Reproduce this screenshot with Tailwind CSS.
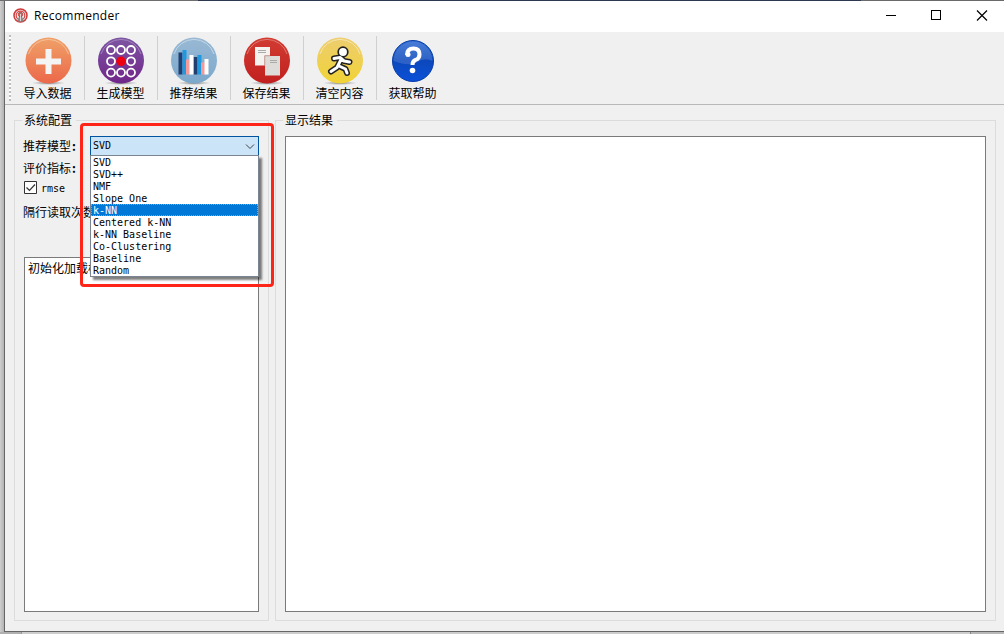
<!DOCTYPE html>
<html lang="zh-CN">
<head>
<meta charset="utf-8">
<title>Recommender</title>
<script src="https://cdn.jsdelivr.net/npm/@tailwindcss/browser@4"></script>
</head>
<body class="relative h-[634px] w-[1004px] overflow-hidden bg-[#c4c4c4] font-['Noto_Sans_CJK_SC',sans-serif] text-[12px] leading-[14px] text-black">
<div class="flex h-px"><div class="w-[198px] bg-[#6e6e6e]"></div><div class="w-[663px] bg-[#2b3850]"></div><div class="flex-1 bg-[#6a6a6a]"></div></div>
<div class="flex h-[631px]">
  <div class="w-1 bg-linear-to-r from-[#cfcfcf] to-[#b2b2b2]"></div>
  <main class="flex flex-1 flex-col border-b border-l border-[#666] bg-[#f0f0f0]">
    <header class="flex h-[31px] items-center bg-white pl-[8px]">
      <svg class="-mt-[2px] h-[15px] w-[15px]" viewBox="0 0 15 15" fill="none">
        <circle cx="7.500" cy="7.500" r="6.500" fill="#eee" stroke="#cf3a38" stroke-width="1.500"/>
        <circle cx="7.500" cy="7.500" r="4.300" stroke="#d24a48" stroke-width="1.200"/>
        <path d="M7.500 4 4.300 13.500h6.400z" fill="#888"/><circle cx="7.500" cy="6.500" r="2.200" fill="#9a7a78" stroke="#c8302e" stroke-width=".8"/><path d="M7.500 6v7" stroke="#eee" stroke-width=".8"/>
      </svg>
      <span class="ml-[6px] -mt-px font-['Open_Sans',sans-serif] text-[12px] tracking-[0.3px]">Recommender</span>
      <svg class="ml-auto h-[31px] w-[120px]" viewBox="0 0 120 31" fill="none" stroke="#000" shape-rendering="crispEdges"><path d="M2 14.500h10M47.500 9.500h9v9h-9z"/><path d="m93 9.500 10 10m0-10-10 10" shape-rendering="auto" stroke-width="1.200"/></svg>
    </header>

    <nav class="flex h-[73px] border-b border-[#b8b8b8] pl-[4px]">
      <svg class="h-[72px] w-[3px]" viewBox="0 0 3 72"><path d="M1 4v64" stroke="#fff" stroke-width="2"/><path d="M1 3v66" stroke="#bcbcbc" stroke-width="2" stroke-dasharray="2 2"/></svg>
      <svg class="absolute h-0 w-0">
        <defs>
          <linearGradient id="orange" x2="0" y2="1"><stop stop-color="#efa168"/><stop offset="1" stop-color="#ec684a"/></linearGradient>
          <linearGradient id="purple" x2="0" y2="1"><stop stop-color="#7d56a2"/><stop offset="1" stop-color="#70268a"/></linearGradient>
          <linearGradient id="sky" x2="0" y2="1"><stop stop-color="#99b9d4"/><stop offset="1" stop-color="#7ba8cc"/></linearGradient>
          <linearGradient id="red" x2="0" y2="1"><stop stop-color="#d13c32"/><stop offset="1" stop-color="#c2201f"/></linearGradient>
          <linearGradient id="yellow" x2="0" y2="1"><stop stop-color="#edcd70"/><stop offset="1" stop-color="#f1d335"/></linearGradient>
          <linearGradient id="blue" x2="0" y2="1"><stop stop-color="#2a68d0"/><stop offset=".5" stop-color="#0c48bc"/><stop offset="1" stop-color="#0a50d8"/></linearGradient>
          <radialGradient id="shade"><stop stop-color="#555" stop-opacity=".8"/><stop offset="1" stop-color="#888" stop-opacity="0"/></radialGradient>
        </defs>
      </svg>
      <div class="my-1 flex w-[73px] flex-col items-center border-r border-[#d0d0d0] pt-px">
        <svg class="h-12 w-12 shrink-0" viewBox="0 0 48 48"><ellipse cx="24.500" cy="46" rx="17" ry="2" fill="url(#shade)"/><circle cx="24.500" cy="23.500" r="23" fill="url(#orange)"/><path d="M4.500 17a21 21 0 0 1 40 0" fill="none" stroke="#f7c09a" stroke-width="1"/><path d="M21.500 12h6v9.500h9.500v6h-9.500v9.500h-6v-9.500H12v-6h9.500z" fill="#f4f4f4"/></svg>
        <span class="mt-px -ml-px">导入数据</span>
      </div>
      <div class="my-1 flex w-[73px] flex-col items-center border-r border-[#d0d0d0] pt-px">
        <svg class="h-12 w-12 shrink-0" viewBox="0 0 48 48"><ellipse cx="24" cy="46" rx="17" ry="2" fill="url(#shade)"/><circle cx="24" cy="23.500" r="23" fill="url(#purple)"/><path d="M4 17a21 21 0 0 1 40 0" fill="none" stroke="#a282be"/><g fill="none" stroke="#fff" stroke-width="1.800"><circle cx="14" cy="13" r="4"/><circle cx="24" cy="13" r="4"/><circle cx="34" cy="13" r="4"/><circle cx="14" cy="24.300" r="4"/><circle cx="34" cy="24.300" r="4"/><circle cx="14" cy="35.600" r="4"/><circle cx="24" cy="35.600" r="4"/><circle cx="34" cy="35.600" r="4"/></g><circle cx="24" cy="24.300" r="4.800" fill="#ee0010"/></svg>
        <span class="mt-px -ml-px">生成模型</span>
      </div>
      <div class="my-1 flex w-[73px] flex-col items-center border-r border-[#d0d0d0] pt-px">
        <svg class="h-12 w-12 shrink-0" viewBox="0 0 48 48"><ellipse cx="24" cy="46" rx="17" ry="2" fill="url(#shade)"/><circle cx="24" cy="23.500" r="23" fill="url(#sky)"/><path d="M4 17a21 21 0 0 1 40 0" fill="none" stroke="#c3d7e7"/><path d="M8.500 15.500h4v22h-4zM23.500 20h4v17.500h-4z" fill="#233f70"/><path d="M12.500 13h4v24.500h-4zM27.500 18h4v19.500h-4z" fill="#2199df"/><path d="M16 22.500h4v15h-4zM31 25.500h4v12h-4z" fill="#f49a9b"/><path d="M19.500 18h4v19.500h-4zM34.500 22h4v15.500h-4z" fill="#fff"/></svg>
        <span class="mt-px -ml-px">推荐结果</span>
      </div>
      <div class="my-1 flex w-[73px] flex-col items-center border-r border-[#d0d0d0] pt-px">
        <svg class="h-12 w-12 shrink-0" viewBox="0 0 48 48"><ellipse cx="24" cy="46" rx="17" ry="2" fill="url(#shade)"/><circle cx="24" cy="23.500" r="23" fill="url(#red)"/><path d="M4 17a21 21 0 0 1 40 0" fill="none" stroke="#df7970"/><path d="M12 10h15v18.500H12z" fill="#f4f3ef"/><path d="M22 19h15v19.500H22z" fill="#dddcd8"/><path d="M15 13.500h8M15 15.500h8M27 23.500h7M27 25.500h7" stroke="#aaa"/><path d="M21.700 28.500V18.700H27" fill="none" stroke="#a65b54" stroke-width=".6"/></svg>
        <span class="mt-px -ml-px">保存结果</span>
      </div>
      <div class="my-1 flex w-[73px] flex-col items-center border-r border-[#d0d0d0] pt-px">
        <svg class="h-12 w-12 shrink-0" viewBox="0 0 48 48"><ellipse cx="24" cy="46" rx="17" ry="2" fill="url(#shade)"/><circle cx="24" cy="23.500" r="23" fill="url(#yellow)"/><path d="M4 17a21 21 0 0 1 40 0" fill="none" stroke="#f6e6ae"/><g stroke-linecap="round" stroke-linejoin="round" fill="none"><path d="m18 21.500 6-1 4 3.500 5.500 1M25.500 21.500 21 30.500 15 34.500M23 29l6.500 3 1.500 4" stroke="#222" stroke-width="6"/><circle cx="27" cy="15" r="4.800" fill="#fff" stroke="#222" stroke-width="1.700"/><path d="m18 21.500 6-1 4 3.500 5.500 1M25.500 21.500 21 30.500 15 34.500M23 29l6.500 3 1.500 4" stroke="#fff" stroke-width="3"/></g></svg>
        <span class="mt-px -ml-px">清空内容</span>
      </div>
      <div class="my-1 flex w-[72px] flex-col items-center pt-px">
        <svg class="h-12 w-12 shrink-0" viewBox="0 0 48 48"><circle cx="24" cy="24" r="20.500" fill="url(#blue)" stroke="#083da9"/><path d="M4.500 24A19.500 19.500 0 0 1 43.500 24q-8-4-15 1t-24-1z" fill="#fff" opacity=".14"/><path d="M18 18q0-6.500 6.500-6.500 6 0 6 6 0 4-4 5.500-3 1-3 5" fill="none" stroke="#fff" stroke-width="4"/><circle cx="19" cy="17.500" r="2.500" fill="#fff"/><circle cx="23.500" cy="33.500" r="2.800" fill="#fff"/></svg>
        <span class="mt-px -ml-px">获取帮助</span>
      </div>
    </nav>

    <div class="flex flex-1 gap-[6px] pt-[8px] pr-2 pb-[10px] pl-[9px]">
      <section class="flex w-[255px] flex-col">
        <h2 class="flex h-[15px] items-center"><span class="h-[8px] w-[8px] self-end border-t border-l border-[#dcdcdc]"></span><span class="mx-[2px] -mt-[2px]">系统配置</span><span class="ml-[2px] h-[8px] flex-1 self-end border-t border-r border-[#dcdcdc]"></span></h2>
        <div class="flex flex-1 flex-col border-x border-b border-[#dcdcdc] px-[9px] pb-[8px]">
          <div class="flex h-[28px] items-center justify-between pt-[8px]">
            <label class="-ml-px whitespace-nowrap">推荐模型<b class="ml-px">:</b></label>
            <div class="mb-px flex h-5 w-[169px] shrink-0 items-center justify-between border border-[#0054a0] bg-[#cce4f7] pr-[3px] pl-[2px] font-['DejaVu_Sans_Mono',monospace] text-[10px]"><span class="mt-px">SVD</span><svg class="h-[10px] w-[10px]" viewBox="0 0 10 10" fill="none" stroke="#444"><path d="m1 3.500 4 4 4-4"/></svg></div>
          </div>
          <div class="flex h-[24px] items-center"><span class="-ml-px">评价指标<b class="ml-px">:</b></span></div>
          <div class="flex h-[15px] items-center gap-1 font-['DejaVu_Sans_Mono',monospace] text-[10px]"><svg class="h-[13px] w-[13px]" viewBox="0 0 13 13"><path d="M.5.5h12v12H.5z" fill="#fff" stroke="#333"/><path d="m2.500 6.500 3 3 5.500-6" fill="none" stroke="#333" stroke-width="1.200"/></svg><span class="mt-[2px]">rmse</span></div>
          <div class="mt-[9px] -ml-px flex h-[16px] items-center">隔行读取次数</div>
          <div class="mt-[37px] flex-1 border border-[#7a7a7a] bg-white px-[3px] pt-[3px]">初始化加载模型</div>
        </div>
      </section>
      <section class="flex flex-1 flex-col">
        <h2 class="flex h-[15px] items-center"><span class="h-[8px] w-[8px] self-end border-t border-l border-[#dcdcdc]"></span><span class="mx-[2px] -mt-[2px]">显示结果</span><span class="ml-[2px] h-[8px] flex-1 self-end border-t border-r border-[#dcdcdc]"></span></h2>
        <div class="flex flex-1 border-x border-b border-[#dcdcdc] px-[9px] pt-[8px] pb-[8px]"><div class="flex-1 border border-[#7a7a7a] bg-white"></div></div>
      </section>
    </div>
  </main>
</div>
<div class="flex h-[2px]"><div class="w-[22px] border-r border-[#999] bg-[#b0b0b0]"></div><div class="w-[949px] border-r border-[#888] bg-[#cdcdcd]"></div><div class="flex-1 bg-[#b8b8b8]"></div></div>

<!-- Open model list -->
<ul class="absolute top-[155px] left-[90px] h-[122px] w-[169px] border border-[#7b8592] bg-white font-['DejaVu_Sans_Mono',monospace] text-[10px] leading-[14px] shadow-[3px_3px_2px_rgba(0,0,0,0.5)] *:h-3 *:pl-[2px] *:whitespace-pre">
  <li>SVD</li><li>SVD++</li><li>NMF</li><li>Slope One</li>
  <li class="bg-[#0078d7] text-white outline-1 -outline-offset-1 outline-dotted outline-[#e98a3a]">k-NN</li>
  <li>Centered k-NN</li><li>k-NN Baseline</li><li>Co-Clustering</li><li>Baseline</li><li>Random</li>
</ul>
<div class="absolute top-[123px] left-[80px] h-[164px] w-[194px] rounded-[4px] border-3 border-[#ff2418]"></div>
</body>
</html>
